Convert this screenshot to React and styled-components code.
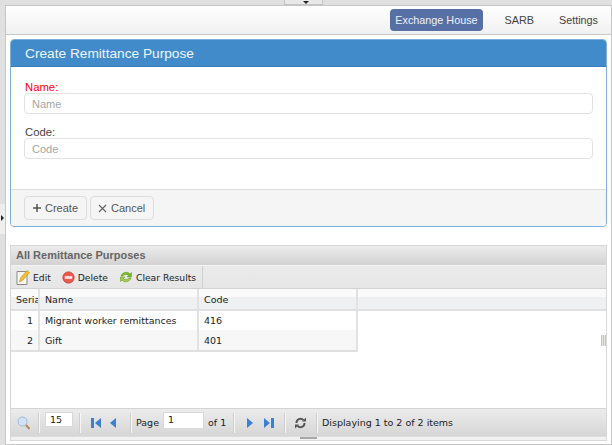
import React from 'react';
import styled, { createGlobalStyle } from 'styled-components';

const GlobalStyle = createGlobalStyle`
  html, body {
    margin: 0;
    padding: 0;
    background: #e0e0e0;
  }
  * {
    box-sizing: border-box;
  }
`;

const Page = styled.div`
  position: relative;
  width: 612px;
  height: 445px;
  overflow: hidden;
  background: #e0e0e0;
  padding: 5px 0 0 5px;
  font-family: "Liberation Sans", Arial, sans-serif;
`;

const TopTab = styled.div`
  position: absolute;
  left: 284px;
  top: 0;
  width: 39px;
  height: 5px;
  background: #e8e8e8;
  border: 1px solid #c4c4c4;
  border-top: 0;
  &::after {
    content: '';
    position: absolute;
    left: 18px;
    top: 1px;
    border-top: 3px solid #222;
    border-left: 3px solid transparent;
    border-right: 3px solid transparent;
  }
`;

const SideHandle = styled.div`
  position: absolute;
  left: 0;
  top: 204px;
  width: 5px;
  height: 30px;
  background: #eeeeee;
  &::after {
    content: '';
    position: absolute;
    left: 1px;
    top: 11px;
    border-left: 3px solid #222;
    border-top: 3px solid transparent;
    border-bottom: 3px solid transparent;
  }
`;

const Main = styled.div`
  width: 607px;
  height: 440px;
  background: #fff;
  border: 1px solid #c6c6c6;
  display: flex;
  flex-direction: column;
`;

const NavBar = styled.nav`
  height: 29px;
  flex: none;
  display: flex;
  justify-content: flex-end;
  align-items: center;
  gap: 15px;
  padding-right: 8px;
  background: linear-gradient(#ffffff, #f1f1f1);
  border-bottom: 1px solid #c8c8c8;
`;

const NavItem = styled.a`
  height: 22px;
  line-height: 22px;
  padding: 0 5px;
  margin-right: ${p => (p.$active ? 2 : 0)}px;
  border-radius: 4px;
  font-size: 10.8px;
  color: ${p => (p.$active ? '#eef1f7' : '#444')};
  background: ${p => (p.$active ? '#5670a6' : 'transparent')};
`;

const Body = styled.div`
  flex: 1;
  min-height: 0;
  display: flex;
  flex-direction: column;
  padding: 4px 4px 3px 4px;
`;

const FormPanel = styled.section`
  height: 188px;
  flex: none;
  display: flex;
  flex-direction: column;
  border: 1px solid #7fb0dc;
  border-radius: 4px;
  overflow: hidden;
`;

const FormHeading = styled.h3`
  margin: 0;
  height: 27px;
  flex: none;
  padding: 0 14px;
  line-height: 27px;
  background: #428bca;
  border-bottom: 1px solid #3a7fbc;
  color: #eef5fb;
  font-size: 13.7px;
  font-weight: 400;
`;

const FormBody = styled.div`
  flex: 1;
  display: flex;
  flex-direction: column;
  gap: 13px;
  padding: 15px 13px 0;
`;

const Field = styled.div`
  display: flex;
  flex-direction: column;
`;

const FieldLabel = styled.label`
  padding-left: 1px;
  font-size: 11.3px;
  line-height: 11px;
  color: ${p => (p.$required ? '#ff0000' : '#444')};
`;

const TextField = styled.input`
  width: 569px;
  height: 21px;
  padding: 0 7px;
  border: 1px solid #e2e2e2;
  border-radius: 4px;
  background: #fff;
  font-family: inherit;
  font-size: 11px;
  outline: none;
  &::placeholder {
    color: #a5a5a5;
    opacity: 1;
  }
`;

const FormFooter = styled.div`
  height: 37px;
  flex: none;
  display: flex;
  align-items: center;
  gap: 3px;
  padding: 0 13px;
  background: #f5f5f5;
  border-top: 1px solid #dddddd;
`;

const FormButton = styled.button`
  width: ${p => p.$w}px;
  height: 24px;
  padding: 0 0 0 7px;
  display: flex;
  align-items: center;
  gap: ${p => p.$gap}px;
  background: #f5f5f5;
  border: 1px solid #dcdcdc;
  border-radius: 4px;
  color: #555;
  font-family: inherit;
  font-size: 11px;
`;

const GridPanel = styled.section`
  flex: 1;
  min-height: 0;
  margin-top: 18px;
  display: flex;
  flex-direction: column;
  border: 1px solid #d8d8d8;
`;

const GridTitle = styled.div`
  height: 20px;
  flex: none;
  padding: 0 5px;
  line-height: 19px;
  background: linear-gradient(#ececec, #d2d2d2);
  border-bottom: 1px solid #f4f4f4;
  color: #666;
  font-size: 11px;
  font-weight: 700;
`;

const GridToolbar = styled.div`
  height: 23px;
  flex: none;
  display: flex;
  align-items: center;
  background: linear-gradient(#ebebeb, #e6e6e6);
  border-bottom: 1px solid #d2d2d2;
`;

const ToolGroup = styled.div`
  width: 192px;
  height: 100%;
  display: flex;
  align-items: center;
  gap: 11px;
  padding: 0 5px;
  border-right: 1px solid #d0d0d0;
`;

const ToolButton = styled.span`
  display: flex;
  align-items: center;
  gap: 3px;
  white-space: nowrap;
  font-family: "DejaVu Sans", sans-serif;
  font-size: 9.2px;
  color: #222;
`;

const GridBody = styled.div`
  flex: 1;
  min-height: 0;
  position: relative;
  background: #fff;
`;

const Table = styled.table`
  border-collapse: collapse;
  table-layout: fixed;
  width: 100%;
  font-family: "DejaVu Sans", sans-serif;
  font-size: 9.5px;
  color: #222;
`;

const HeadCell = styled.th`
  height: 21px;
  padding: 0 0 0 5px;
  overflow: hidden;
  white-space: nowrap;
  font-weight: 400;
  text-align: left;
  background: linear-gradient(#fafafa 0, #fafafa 40%, #eef0f2 40%, #eef0f2 100%);
  border-right: ${p => (p.$last ? '0' : '2px solid #e2e2e2')};
  border-bottom: 2px solid #e0e0e0;
`;

const Row = styled.tr`
  background: ${p => (p.$alt ? '#f7f7f7' : '#fff')};
`;

const Cell = styled.td`
  height: ${p => (p.$lastRow ? 21 : 20)}px;
  padding: 0 ${p => (p.$right ? 5 : 0)}px 0 ${p => (p.$right ? 0 : 5)}px;
  text-align: ${p => (p.$right ? 'right' : 'left')};
  border-right: 2px solid #e2e2e2;
  border-bottom: ${p => (p.$lastRow ? '2px solid #e0e0e0' : '0')};
`;

const ResizeGrip = styled.div`
  position: absolute;
  right: 0;
  top: 46px;
  width: 5px;
  height: 11px;
  background: repeating-linear-gradient(90deg, #c6c6be 0, #c6c6be 1px, #e4e4e0 1px, #e4e4e0 2px);
`;

const Pager = styled.div`
  height: 28px;
  flex: none;
  display: flex;
  align-items: center;
  padding-left: 6px;
  background: linear-gradient(#ececec, #d6d6d6);
  border-top: 1px solid #d4d4d4;
  font-family: "DejaVu Sans", sans-serif;
  font-size: 9.5px;
  color: #222;
`;

const PagerSep = styled.span`
  width: 2px;
  height: 20px;
  flex: none;
  margin: 0 ${p => p.$r}px 0 ${p => p.$l}px;
  background: linear-gradient(90deg, #cfcfcf 50%, #f6f6f6 50%);
`;

const PagerInput = styled.span`
  width: ${p => p.$w}px;
  height: ${p => p.$h}px;
  flex: none;
  margin-bottom: ${p => 21 - p.$h}px;
  padding-left: 4px;
  line-height: 13px;
  border: 1px solid #d8d8d8;
  background: #fff;
`;

const PagerText = styled.span`
  flex: none;
  width: ${p => (p.$w ? `${p.$w}px` : 'auto')};
  white-space: nowrap;
  margin-left: ${p => p.$l || 0}px;
`;

const PagerIcon = styled.svg`
  flex: none;
  margin-left: ${p => p.$l || 0}px;
`;

const PagerFoot = styled.div`
  height: 4px;
  flex: none;
  position: relative;
  background: #f2f2f2;
  border-top: 1px solid #dcdcdc;
  &::after {
    content: '';
    position: absolute;
    left: 289px;
    top: 0;
    width: 17px;
    height: 2px;
    background: #a8a8a8;
  }
`;

const PlusIcon = () => (
  <svg width="10" height="10" viewBox="0 0 10 10">
    <path d="M5 1v8M1 5h8" stroke="#555" strokeWidth="1.5" fill="none" />
  </svg>
);

const CrossIcon = () => (
  <svg width="9" height="9" viewBox="0 0 9 9">
    <path d="M1 1l7 7M8 1l-7 7" stroke="#666" strokeWidth="1.2" fill="none" />
  </svg>
);

const EditIcon = () => (
  <svg width="14" height="16" viewBox="0 0 14 16">
    <path d="M1 2.500h10v13h-10z" fill="#f8f8f4" stroke="#8a8a80" />
    <path d="M3.500 13l1-4 6.500-7.500 2.500 2-6.500 7.500z" fill="#f2c038" stroke="#c89420" strokeWidth=".7" />
  </svg>
);

const DeleteIcon = () => (
  <svg width="13" height="13" viewBox="0 0 14 14">
    <circle cx="7" cy="7" r="6" fill="#ec5a52" stroke="#c8382f" />
    <rect x="3" y="5.500" width="8" height="3" fill="#fbe6e4" />
  </svg>
);

const ClearIcon = () => (
  <svg width="14" height="14" viewBox="0 0 14 14">
    <path d="M2 6c1-4 7-5 9-2l1.500-1.500V7H8l1.500-1.500C8 4 5 4 4 6z" fill="#7cb82e" stroke="#5c9420" strokeWidth=".5" />
    <path d="M12 8c-1 4-7 5-9 2l-1.500 1.500V7H6L4.500 8.500C6 10 9 10 10 8z" fill="#a2cf46" stroke="#5c9420" strokeWidth=".5" />
  </svg>
);

const SearchIcon = () => (
  <PagerIcon width="13" height="14" viewBox="0 0 13 14">
    <circle cx="5.500" cy="5.500" r="4.500" fill="#cfe2f6" stroke="#9db9d8" />
    <path d="M9 9l3.500 4" stroke="#b08a5a" strokeWidth="2" />
  </PagerIcon>
);

const FirstIcon = ({ l }) => (
  <PagerIcon width="10" height="12" viewBox="0 0 10 12" $l={l}>
    <rect x="0" y="1" width="3" height="10" fill="#3d7fd0" />
    <path d="M10 1v10L4 6z" fill="#3d7fd0" />
  </PagerIcon>
);

const PrevIcon = ({ l }) => (
  <PagerIcon width="6" height="12" viewBox="0 0 6 12" $l={l}>
    <path d="M6 1v10L0 6z" fill="#3d7fd0" />
  </PagerIcon>
);

const NextIcon = ({ l }) => (
  <PagerIcon width="6" height="12" viewBox="0 0 6 12" $l={l}>
    <path d="M0 1v10l6-5z" fill="#3d7fd0" />
  </PagerIcon>
);

const LastIcon = ({ l }) => (
  <PagerIcon width="10" height="12" viewBox="0 0 10 12" $l={l}>
    <path d="M0 1v10l6-5z" fill="#3d7fd0" />
    <rect x="7" y="1" width="3" height="10" fill="#3d7fd0" />
  </PagerIcon>
);

const RefreshIcon = () => (
  <PagerIcon width="11" height="12" viewBox="0 0 11 12">
    <path d="M1.500 6A4 4 0 0 1 8.500 3.200M9.500 6A4 4 0 0 1 2.500 8.800" stroke="#555" strokeWidth="2" fill="none" />
    <path d="M7 4.500h4V.5zM4 7.500H0v4z" fill="#555" />
  </PagerIcon>
);

const rows = [
  { id: 1, name: 'Migrant worker remittances', code: '416' },
  { id: 2, name: 'Gift', code: '401' },
];

const App = () => (
  <Page>
    <GlobalStyle />
    <TopTab />
    <SideHandle />
    <Main>
      <NavBar>
        <NavItem $active>Exchange House</NavItem>
        <NavItem>SARB</NavItem>
        <NavItem>Settings</NavItem>
      </NavBar>
      <Body>
        <FormPanel>
          <FormHeading>Create Remittance Purpose</FormHeading>
          <FormBody>
            <Field>
              <FieldLabel $required>Name:</FieldLabel>
              <TextField placeholder="Name" />
            </Field>
            <Field>
              <FieldLabel>Code:</FieldLabel>
              <TextField placeholder="Code" />
            </Field>
          </FormBody>
          <FormFooter>
            <FormButton $w={63} $gap={3}><PlusIcon /> Create</FormButton>
            <FormButton $w={64} $gap={4}><CrossIcon /> Cancel</FormButton>
          </FormFooter>
        </FormPanel>
        <GridPanel>
          <GridTitle>All Remittance Purposes</GridTitle>
          <GridToolbar>
            <ToolGroup>
              <ToolButton><EditIcon /> Edit</ToolButton>
              <ToolButton><DeleteIcon /> Delete</ToolButton>
              <ToolButton><ClearIcon /> Clear Results</ToolButton>
            </ToolGroup>
          </GridToolbar>
          <GridBody>
            <Table>
              <colgroup>
                <col width="28" />
                <col width="159" />
                <col width="159" />
                <col />
              </colgroup>
              <thead>
                <tr>
                  <HeadCell>Serial</HeadCell>
                  <HeadCell>Name</HeadCell>
                  <HeadCell>Code</HeadCell>
                  <HeadCell $last />
                </tr>
              </thead>
              <tbody>
                {rows.map((row, i) => (
                  <Row key={row.id} $alt={i === 1}>
                    <Cell $right $lastRow={i === 1}>{row.id}</Cell>
                    <Cell $lastRow={i === 1}>{row.name}</Cell>
                    <Cell $lastRow={i === 1}>{row.code}</Cell>
                  </Row>
                ))}
              </tbody>
            </Table>
            <ResizeGrip />
          </GridBody>
          <Pager>
            <SearchIcon />
            <PagerSep $l={8} $r={5} />
            <PagerInput $w={28} $h={15}>15</PagerInput>
            <PagerSep $l={6} $r={10} />
            <FirstIcon />
            <PrevIcon l={9} />
            <PagerSep $l={14} $r={4} />
            <PagerText $w={27}>Page</PagerText>
            <PagerInput $w={41} $h={17}>1</PagerInput>
            <PagerText $l={4} $w={18}>of 1</PagerText>
            <PagerSep $l={7} $r={12} />
            <NextIcon />
            <LastIcon l={11} />
            <PagerSep $l={10} $r={9} />
            <RefreshIcon />
            <PagerSep $l={10} $r={4} />
            <PagerText>Displaying 1 to 2 of 2 items</PagerText>
          </Pager>
          <PagerFoot />
        </GridPanel>
      </Body>
    </Main>
  </Page>
);

export default App;
